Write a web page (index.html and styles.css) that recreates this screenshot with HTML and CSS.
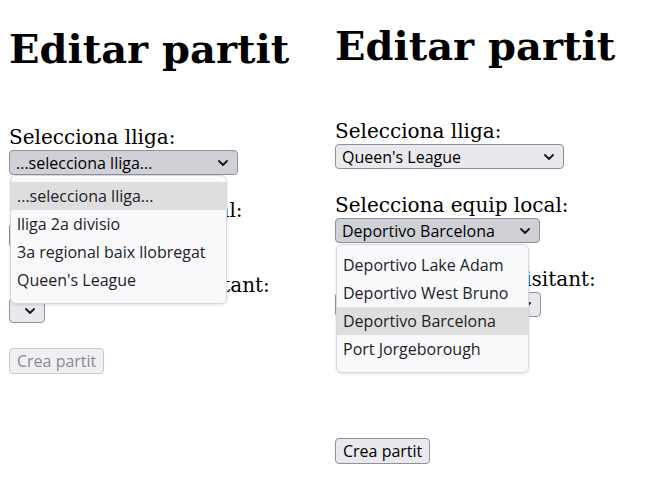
FILE: index.html
```html
<!DOCTYPE html>
<html lang="ca">
<head>
<meta charset="utf-8">
<title>Editar partit</title>
<link rel="stylesheet" href="styles.css">
</head>
<body>
<div class="page">
  <section class="col col-a">
    <h1>Editar partit</h1>
    <div class="field">
      <label class="lbl">Selecciona lliga:</label>
      <div class="select-wrap">
        <div class="select open w-league"><span class="val">...selecciona lliga...</span><svg class="chev" viewBox="0 0 10 6" width="10" height="6"><path d="M1 1 L5 5 L9 1" fill="none" stroke="#1c1b22" stroke-width="1.9" stroke-linecap="round" stroke-linejoin="round"/></svg></div>
        <ul class="popup popup-a">
          <li class="hl">...selecciona lliga...</li>
          <li>lliga 2a divisio</li>
          <li>3a regional baix llobregat</li>
          <li>Queen's League</li>
        </ul>
      </div>
    </div>
    <div class="field field-2">
      <label class="lbl">Selecciona equip local:</label>
      <div class="select-wrap">
        <div class="select w-empty"><span class="val"></span><svg class="chev" viewBox="0 0 10 6" width="10" height="6"><path d="M1 1 L5 5 L9 1" fill="none" stroke="#1c1b22" stroke-width="1.9" stroke-linecap="round" stroke-linejoin="round"/></svg></div>
      </div>
    </div>
    <div class="field field-3">
      <label class="lbl">Selecciona equip visitant:</label>
      <div class="select-wrap">
        <div class="select w-empty"><span class="val"></span><svg class="chev" viewBox="0 0 10 6" width="10" height="6"><path d="M1 1 L5 5 L9 1" fill="none" stroke="#1c1b22" stroke-width="1.9" stroke-linecap="round" stroke-linejoin="round"/></svg></div>
      </div>
    </div>
    <div class="actions">
      <button class="btn" disabled>Crea partit</button>
    </div>
  </section>

  <section class="col col-b">
    <h1>Editar partit</h1>
    <div class="field">
      <label class="lbl">Selecciona lliga:</label>
      <div class="select-wrap">
        <div class="select w-league"><span class="val">Queen's League</span><svg class="chev" viewBox="0 0 10 6" width="10" height="6"><path d="M1 1 L5 5 L9 1" fill="none" stroke="#1c1b22" stroke-width="1.9" stroke-linecap="round" stroke-linejoin="round"/></svg></div>
      </div>
    </div>
    <div class="field field-2">
      <label class="lbl">Selecciona equip local:</label>
      <div class="select-wrap">
        <div class="select open w-team"><span class="val">Deportivo Barcelona</span><svg class="chev" viewBox="0 0 10 6" width="10" height="6"><path d="M1 1 L5 5 L9 1" fill="none" stroke="#1c1b22" stroke-width="1.9" stroke-linecap="round" stroke-linejoin="round"/></svg></div>
        <ul class="popup popup-b">
          <li>Deportivo Lake Adam</li>
          <li>Deportivo West Bruno</li>
          <li class="hl">Deportivo Barcelona</li>
          <li>Port Jorgeborough</li>
        </ul>
      </div>
    </div>
    <div class="field field-3">
      <label class="lbl">Selecciona equip visitant:</label>
      <div class="select-wrap">
        <div class="select w-team2"><span class="val">Deportivo Lake Adam</span><svg class="chev" viewBox="0 0 10 6" width="10" height="6"><path d="M1 1 L5 5 L9 1" fill="none" stroke="#1c1b22" stroke-width="1.9" stroke-linecap="round" stroke-linejoin="round"/></svg></div>
      </div>
    </div>
    <div class="actions">
      <button class="btn">Crea partit</button>
    </div>
  </section>
</div>
</body>
</html>
```

FILE: styles.css
```css
* { box-sizing: border-box; }

body {
  margin: 0;
  background: #ffffff;
  color: #000000;
  font-family: "DejaVu Serif", serif;
}

.page {
  display: grid;
  grid-template-columns: 326px 326px;
  padding-left: 9px;
}

.col {
  display: flex;
  flex-direction: column;
  align-items: flex-start;
  padding-top: 26px;
  --h1-gap: 54px;
  --gap-2: 24px;
  --gap-3: 26px;
  --btn-gap: 25px;
}

.col-b {
  padding-top: 23px;
  --h1-gap: 51px;
  --gap-2: 25px;
  --gap-3: 25px;
  --btn-gap: 121px;
}

h1 {
  margin: 0;
  font-size: 40px;
  line-height: 46px;
  font-weight: bold;
}

.field {
  display: flex;
  flex-direction: column;
  align-items: flex-start;
  margin-top: var(--h1-gap);
}

.field-2 { margin-top: var(--gap-2); }
.field-3 { margin-top: var(--gap-3); }

.lbl {
  display: block;
  font-size: 20px;
  line-height: 23px;
  margin-bottom: 1px;
}

.select-wrap {
  position: relative;
}

.select {
  display: flex;
  align-items: center;
  justify-content: space-between;
  height: 25px;
  padding: 0 9px 0 6px;
  background: #e9e9ed;
  border: 1px solid #8f8f9d;
  border-radius: 4px;
  font-family: "Open Sans", "Noto Sans", sans-serif;
  font-size: 16px;
  color: #000;
  white-space: nowrap;
}

.select.open { background: #d0d0d7; }

.chev { flex: none; display: block; }

.w-league { width: 229px; }
.w-team { width: 205px; }
.w-team2 { width: 206px; }
.w-empty { width: 36px; }

.popup {
  position: absolute;
  top: 100%;
  left: 1px;
  margin: 0;
  padding: 6px 0 9px;
  list-style: none;
  background: #f9f9fb;
  border: 1px solid #d8d8dc;
  border-radius: 6px;
  box-shadow: 0 1px 3px rgba(0, 0, 0, 0.12);
  font-family: "Open Sans", "Noto Sans", sans-serif;
  font-size: 16px;
  color: #222226;
  z-index: 2;
}

.popup-a { width: 217px; }
.popup-b { width: 193px; top: calc(100% + 1px); }

.popup li {
  height: 28px;
  line-height: 28px;
  padding-left: 6px;
  white-space: nowrap;
}

.popup li.hl { background: #dedede; }

.actions { margin-top: var(--btn-gap); }

.btn {
  height: 26px;
  padding: 0 7px;
  background: #e9e9ed;
  border: 1px solid #8f8f9d;
  border-radius: 4px;
  font-family: "Open Sans", "Noto Sans", sans-serif;
  font-size: 16px;
  color: #000;
}

.btn:disabled {
  background: #f0f0f4;
  border-color: #c9c9d0;
  color: #8a8a92;
}
```
